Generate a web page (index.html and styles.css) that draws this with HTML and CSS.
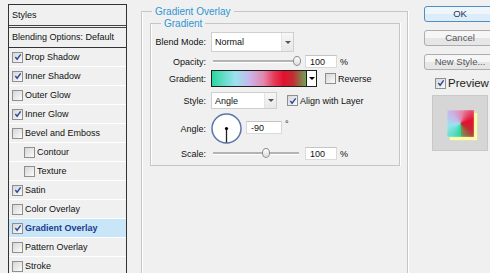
FILE: index.html
```html
<!DOCTYPE html>
<html lang="en">
<head>
  <meta charset="UTF-8">
  <title>Layer Style</title>
  <link rel="stylesheet" href="styles.css">
</head>
<body>

  <!-- style list -->
  <div class="styles-panel">
    <div class="head">Styles</div>
    <div class="blend">Blending Options: Default</div>
    <div class="item"><span class="cb on"><svg viewBox="0 0 9 9"><path d="M1.5 4.5 3.5 7 7.5 1.5"/></svg></span>Drop Shadow</div>
    <div class="item"><span class="cb on"><svg viewBox="0 0 9 9"><path d="M1.5 4.5 3.5 7 7.5 1.5"/></svg></span>Inner Shadow</div>
    <div class="item"><span class="cb"></span>Outer Glow</div>
    <div class="item"><span class="cb on"><svg viewBox="0 0 9 9"><path d="M1.5 4.5 3.5 7 7.5 1.5"/></svg></span>Inner Glow</div>
    <div class="item"><span class="cb"></span>Bevel and Emboss</div>
    <div class="item sub"><span class="cb"></span>Contour</div>
    <div class="item sub"><span class="cb"></span>Texture</div>
    <div class="item"><span class="cb on"><svg viewBox="0 0 9 9"><path d="M1.5 4.5 3.5 7 7.5 1.5"/></svg></span>Satin</div>
    <div class="item"><span class="cb"></span>Color Overlay</div>
    <div class="item active"><span class="cb on"><svg viewBox="0 0 9 9"><path d="M1.5 4.5 3.5 7 7.5 1.5"/></svg></span>Gradient Overlay</div>
    <div class="item"><span class="cb"></span>Pattern Overlay</div>
    <div class="item"><span class="cb"></span>Stroke</div>
  </div>

  <!-- settings -->
  <fieldset class="group outer">
    <legend>Gradient Overlay</legend>
    <fieldset class="group inner">
      <legend>Gradient</legend>

      <div class="row r-blend">
        <label>Blend Mode:</label>
        <div class="select w-blend"><span>Normal</span><i class="arrow"><b class="tri"></b></i></div>
      </div>

      <div class="row r-opacity">
        <label>Opacity:</label>
        <div class="slider w-op"><span class="thumb" style="left: 96%"></span></div>
        <div class="num">100</div>
        <span class="unit">%</span>
      </div>

      <div class="row r-grad">
        <label>Gradient:</label>
        <div class="grad"><span class="fill"></span><i class="drop"><b class="tri dark"></b></i></div>
        <span class="cb"></span><span class="cb-text">Reverse</span>
      </div>

      <div class="row r-style">
        <label>Style:</label>
        <div class="select w-style"><span>Angle</span><i class="arrow"><b class="tri"></b></i></div>
        <span class="cb on"><svg viewBox="0 0 9 9"><path d="M1.5 4.5 3.5 7 7.5 1.5"/></svg></span><span class="cb-text">Align with Layer</span>
      </div>

      <div class="row r-angle">
        <label>Angle:</label>
        <svg class="dial" viewBox="0 0 31 31">
          <circle cx="15.5" cy="15.5" r="14.5" fill="#fff" stroke="#5a76a6" stroke-width="1.5"/>
          <line x1="15.5" y1="15.5" x2="15.5" y2="29.5" stroke="#222" stroke-width="1.3"/>
          <circle cx="15.5" cy="15.5" r="1.6" fill="#000"/>
        </svg>
        <div class="num">-90</div>
        <span class="deg">°</span>
      </div>

      <div class="row r-scale">
        <label>Scale:</label>
        <div class="slider w-sc"><span class="thumb" style="left: 62%"></span></div>
        <div class="num">100</div>
        <span class="unit">%</span>
      </div>
    </fieldset>
  </fieldset>

  <!-- buttons + preview -->
  <div class="side">
    <div class="btn default">OK</div>
    <div class="btn">Cancel</div>
    <div class="btn">New Style...</div>
    <div class="preview-check">
      <span class="cb on"><svg viewBox="0 0 9 9"><path d="M1.5 4.5 3.5 7 7.5 1.5"/></svg></span>Preview
    </div>
    <div class="preview">
      <div class="swatch"></div>
    </div>
  </div>

</body>
</html>
```

FILE: styles.css
```css
body {
  margin: 0;
  height: 273px;
  overflow: hidden;
  display: flex;
  align-items: flex-start;
  background: #f0f0f0;
  font-family: "Liberation Sans", Arial, sans-serif;
  font-size: 9px;
  color: #111;
}

/* ---- left list ---- */
.styles-panel {
  margin: 4px 0 0 8px;
  width: 119px;
  height: 300px;
  box-sizing: border-box;
  border: 1px solid #333;
  border-bottom: none;
  flex-shrink: 0;
}
.head {
  height: 20px;
  line-height: 20px;
  padding-left: 3px;
  border-bottom: 3px double #444;
}
.blend {
  height: 19px;
  line-height: 19px;
  padding-left: 3px;
  border-bottom: 1px solid #333;
}
.item {
  height: 18px;
  display: flex;
  align-items: center;
  gap: 2px;
  padding-left: 3px;
  border-bottom: 1px solid #fff;
}
.item.sub {
  padding-left: 15px;
}
.item.active {
  background: #c8e6f7;
  color: #1c3a8c;
  font-weight: bold;
}

.cb {
  width: 11px;
  height: 11px;
  box-sizing: border-box;
  border: 1px solid #8f8f8f;
  background: linear-gradient(135deg, #d6d6d6, #fbfbfb);
  display: inline-flex;
  align-items: center;
  justify-content: center;
  flex-shrink: 0;
}
.cb svg {
  width: 8px;
  height: 8px;
  fill: none;
  stroke: #2c4aa0;
  stroke-width: 1.6;
}

/* ---- fieldsets ---- */
.group {
  margin: 0;
  padding: 0;
  border: 1px solid #c6c6c6;
  box-shadow: inset 1px 0 #fff, 1px 0 #fff;
}
.group legend {
  padding: 0 3px;
  margin-left: 10px;
  color: #2f95d2;
  font-size: 10px;
  line-height: 11px;
}
.outer {
  margin: 6px 0 0 14px;
  width: 267px;
  height: 300px;
  box-sizing: border-box;
  flex-shrink: 0;
}
.inner {
  margin: 1px 7px 0 8px;
  padding-bottom: 5px;
}
.inner legend {
  margin-left: 10px;
}

.row {
  display: flex;
  align-items: center;
}
.row label {
  width: 55px;
  text-align: right;
  margin-right: 5px;
  flex-shrink: 0;
}
.r-blend { margin-top: 3px; height: 20px; }
.r-opacity { margin-top: 3px; height: 13px; }
.r-grad { margin-top: 2px; height: 17px; }
.r-style { margin-top: 5px; height: 17px; }
.r-angle { margin-top: 4px; height: 31px; }
.r-scale { margin-top: 3px; height: 13px; }

.select {
  height: 100%;
  box-sizing: border-box;
  border: 1px solid #cfcfcf;
  background: #fff;
  display: flex;
}
.select span {
  flex: 1;
  padding-left: 3px;
  display: flex;
  align-items: center;
}
.select .arrow {
  width: 11px;
  border-left: 1px solid #e4e4e4;
  background: linear-gradient(#f7f7f7, #e8e8e8);
  display: flex;
  align-items: center;
  justify-content: center;
}
.w-blend { width: 83px; }
.w-style { width: 66px; margin-right: 10px; }

.tri {
  width: 0;
  height: 0;
  border-left: 3px solid transparent;
  border-right: 3px solid transparent;
  border-top: 3px solid #555;
}
.tri.dark {
  border-top-color: #000;
}

.slider {
  position: relative;
  height: 11px;
  margin-left: 2px;
}
.slider::before {
  content: "";
  position: absolute;
  left: 0;
  right: 0;
  top: 4px;
  height: 2px;
  background: #b3b3b3;
  border-bottom: 1px solid #fff;
}
.thumb {
  position: absolute;
  top: 0;
  width: 8px;
  height: 10px;
  box-sizing: border-box;
  border: 1px solid #8c8c8c;
  border-radius: 50%;
  background: linear-gradient(#fff, #dcdcdc);
  transform: translateX(-50%);
}
.w-op { width: 88px; margin-right: 4px; }
.w-sc { width: 86px; margin-right: 6px; }

.num {
  width: 32px;
  height: 13px;
  line-height: 13px;
  box-sizing: border-box;
  border: 1px solid #dadada;
  border-top-color: #c4c4c4;
  background: #fff;
  padding-left: 4px;
}
.unit {
  margin-left: 3px;
}

.grad {
  width: 106px;
  height: 17px;
  box-sizing: border-box;
  border: 1px solid #1e1e1e;
  display: flex;
  margin-right: 8px;
}
.grad .fill {
  flex: 1;
  background: linear-gradient(to right, #2ad69a, #62dcc6 12%, #9be2ef 25%, #c8b6ea 40%, #e486ad 55%, #e63b5a 66%, #e3102d 76%, #c42a32 86%, #6aa457);
}
.grad .drop {
  width: 9px;
  border-left: 1px solid #1e1e1e;
  background: #fff;
  display: flex;
  align-items: center;
  justify-content: center;
}

.cb-text {
  margin-left: 2px;
}

.dial {
  width: 31px;
  height: 31px;
  margin-right: 4px;
  flex-shrink: 0;
}
.r-angle .num {
  width: 36px;
  margin-top: -2px;
}
.deg {
  align-self: flex-start;
  margin: 6px 0 0 3px;
}

/* ---- right column ---- */
.side {
  margin: 6px 0 0 16px;
  width: 74px;
  flex-shrink: 0;
  display: flex;
  flex-direction: column;
}
.btn {
  width: 72px;
  height: 16px;
  box-sizing: border-box;
  margin-bottom: 8px;
  border: 1px solid #adadad;
  border-radius: 3px;
  background: linear-gradient(#f6f6f6 50%, #e6e6e6 50%);
  text-align: center;
  line-height: 14px;
  font-size: 9.5px;
  color: #555;
}
.btn.default {
  border-color: #4d8fc4;
  background: linear-gradient(#eef6fc 50%, #dcedf9 50%);
  color: #1d3558;
}
.preview-check {
  display: flex;
  align-items: center;
  gap: 2px;
  margin: -1px 0 0 11px;
  height: 12px;
  font-size: 11.5px;
  color: #222;
}
.preview {
  margin: 6px 0 0 8px;
  width: 56px;
  height: 56px;
  box-sizing: border-box;
  border: 1px solid #c8c8c8;
  background: #d6d6d6;
  padding: 14px;
}
.swatch {
  width: 27px;
  height: 27px;
  background: conic-gradient(from 180deg, #2ad69a, #62dcc6 10%, #9be2ef 22%, #c8b6ea 38%, #e486ad 52%, #e3102d 70%, #c42a32 84%, #6aa457);
  box-shadow: 3px 3px 1px #fdfba6, inset 0 0 2px rgba(255, 255, 255, 0.6);
}
```
